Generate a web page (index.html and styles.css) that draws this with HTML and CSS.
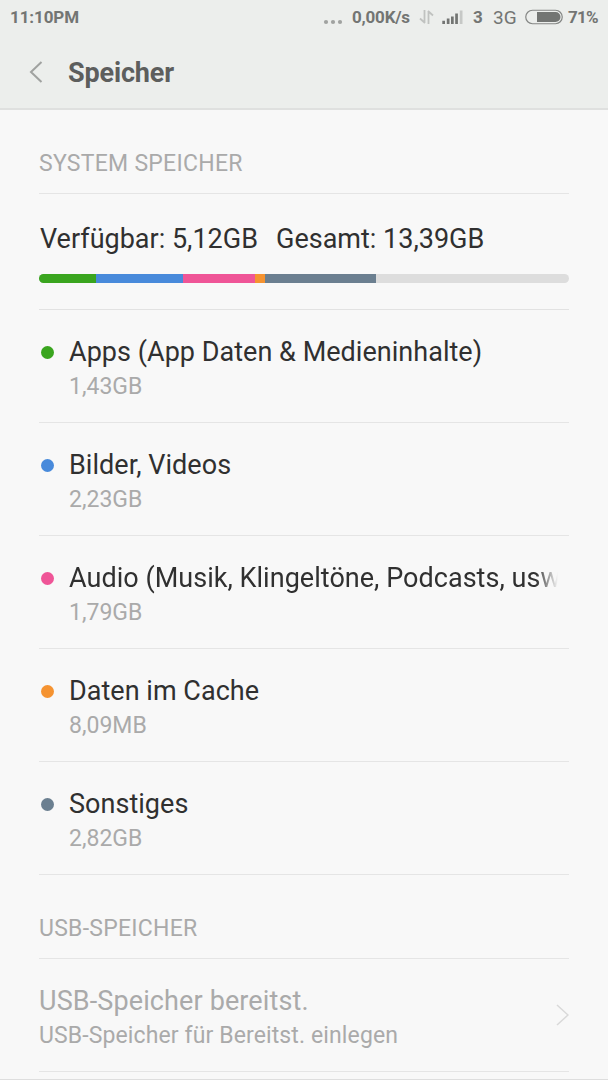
FILE: index.html
```html
<!DOCTYPE html>
<html lang="de">
<head>
<meta charset="utf-8">
<title>Speicher</title>
<link rel="stylesheet" href="styles.css">
</head>
<body>
<div class="screen">
  <header class="header">
    <div class="status">
      <span class="clock">11:10PM</span>
      <svg class="dots" width="20" height="6" viewBox="0 0 20 6"><circle cx="3" cy="3" r="2.1"/><circle cx="10" cy="3" r="2.1"/><circle cx="17" cy="3" r="2.1"/></svg>
      <span class="speed">0,00K/s</span>
      <svg class="transfer" width="15" height="16" viewBox="0 0 15 16"><path d="M5.500 1v13M6 14L1 9.500M9.500 15V2M9 2l5 4.500"/></svg>
      <svg class="signal" width="22" height="14" viewBox="0 0 22 14"><path d="M.3 10.700h2.700V14H.3zM4.800 8.500h2.700V14H4.800zM9 6.500h2.700V14H9zM13.200 3.500h2.700V14h-2.700z"/><path class="faint" d="M17.800 .5h2.700V14h-2.700z"/></svg>
      <span class="sim">3</span>
      <span class="network">3G</span>
      <svg class="battery" width="38" height="16" viewBox="0 0 38 16"><rect class="shell" x=".75" y="1.25" width="36.5" height="13.5" rx="6.75"/><path d="M12 3h18.500a5 5 0 0 1 0 10H12z"/></svg>
      <span class="percent">71%</span>
    </div>
    <div class="titlebar">
      <svg class="back" width="14" height="24" viewBox="0 0 14 24"><path d="M12.5 2L2 12l10.500 10"/></svg>
      <h1 class="title">Speicher</h1>
    </div>
  </header>
  <main class="content">
    <h2 class="section">SYSTEM SPEICHER</h2>
    <section class="usage">
      <div class="totals"><span>Verfügbar: 5,12GB</span><span>Gesamt: 13,39GB</span></div>
      <div class="bar"><i class="seg-apps"></i><i class="seg-images"></i><i class="seg-audio"></i><i class="seg-cache"></i><i class="seg-other"></i></div>
    </section>
    <ul class="list">
      <li class="row"><i class="dot apps"></i><div class="text"><div class="name">Apps (App Daten &amp; Medieninhalte)</div><div class="size">1,43GB</div></div></li>
      <li class="row"><i class="dot images"></i><div class="text"><div class="name">Bilder, Videos</div><div class="size">2,23GB</div></div></li>
      <li class="row"><i class="dot audio"></i><div class="text"><div class="name fade">Audio (Musik, Klingeltöne, Podcasts, usw</div><div class="size">1,79GB</div></div></li>
      <li class="row"><i class="dot cache"></i><div class="text"><div class="name">Daten im Cache</div><div class="size">8,09MB</div></div></li>
      <li class="row"><i class="dot other"></i><div class="text"><div class="name">Sonstiges</div><div class="size">2,82GB</div></div></li>
    </ul>
    <h2 class="section usb">USB-SPEICHER</h2>
    <div class="row mount">
      <div class="text"><div class="name">USB-Speicher bereitst.</div><div class="size">USB-Speicher für Bereitst. einlegen</div></div>
      <svg class="next" width="13" height="22" viewBox="0 0 13 22"><path d="M1 1l11 10L1 21"/></svg>
    </div>
  </main>
</div>
</body>
</html>
```
FILE: styles.css
```css
* { box-sizing: border-box; }
body { margin: 0; background: #f8f8f8; font-family: Roboto, sans-serif; color: #303030; }
.screen { height: 1080px; display: flex; flex-direction: column; border-bottom: 1px solid #dedede; overflow: hidden; }
.header { height: 110px; background: #eceeec; border-bottom: 2px solid #dfe0df; }
.status { height: 34px; display: flex; align-items: center; padding: 0 10px; font-size: 17px; font-weight: 700; color: #737573; white-space: nowrap; }
.status svg { fill: #737573; flex: none; }
.clock { width: 314px; letter-spacing: -0.1px; }
.status .dots { margin-top: 9px; fill: #a0a2a0; }
.speed { width: 58px; margin-left: 9px; letter-spacing: -0.2px; }
.status .transfer { margin-left: 9px; fill: none; stroke: #c0c2c0; stroke-width: 1.8; }
.status .signal { margin-left: 8px; }
.status .signal .faint { fill: #c6c8c6; }
.sim { width: 10px; margin-left: 9px; }
.network { width: 24px; margin-left: 10px; font-size: 19px; font-weight: 400; }
.status .battery { margin-left: 8px; }
.status .battery .shell { fill: none; stroke: #858785; stroke-width: 1.2; }
.percent { margin-left: 5px; letter-spacing: -0.8px; }
.speed, .sim, .network, .percent { flex: none; }
.clock { width: 313px; flex: none; }
.titlebar { height: 76px; display: flex; align-items: center; padding-left: 29px; }
.back { fill: none; stroke: #a0a2a0; stroke-width: 2; }
.title { margin: 2px 0 0 25px; font-size: 27px; line-height: 32px; font-weight: 700; letter-spacing: -0.15px; color: #5d5e5d; }
.content { padding: 0 39px; }
.section { margin: 0; height: 84px; padding-top: 40px; border-bottom: 1px solid #e5e5e5; font-size: 23px; line-height: 28px; font-weight: 400; letter-spacing: 0.27px; color: #aaa; }
.usage { height: 116px; padding-top: 29px; border-bottom: 1px solid #e2e2e2; }
.totals { display: flex; gap: 18px; padding-left: 1px; font-size: 27px; line-height: 32px; white-space: nowrap; }
.bar { height: 9px; margin-top: 19px; border-radius: 5px; overflow: hidden; background: #ddd; display: flex; }
.seg-apps { width: 57px; background: #3aa51f; }
.seg-images { width: 87px; background: #488adb; }
.seg-audio { width: 72px; background: #ef5597; }
.seg-cache { width: 10px; background: #f59331; }
.seg-other { width: 111px; background: #6b7f90; }
.list { margin: 0; padding: 0; list-style: none; }
.row { height: 113px; display: flex; padding-top: 26px; border-bottom: 1px solid #e5e5e5; }
.text { min-width: 0; flex: 1; }
.dot { width: 13px; height: 13px; margin: 10px 15.5px 0 1.5px; border-radius: 50%; flex: none; }
.apps { background: #3aa51f; }
.images { background: #488adb; }
.audio { background: #ef5597; }
.cache { background: #f59331; }
.other { background: #6b7f90; }
.name { font-size: 27px; line-height: 32px; letter-spacing: 0.03px; white-space: nowrap; }
.fade { width: 492px; mask-image: linear-gradient(to right, #000 467px, transparent 489px); }
.size { margin-top: 5px; font-size: 23px; line-height: 28px; color: #aaa; white-space: nowrap; }
.usb { letter-spacing: 0.25px; }
.mount .name, .mount .size { color: #aaa; letter-spacing: 0.12px; }
.next { margin-top: 19px; fill: none; stroke: #d9d9d9; stroke-width: 1.5; }
```
